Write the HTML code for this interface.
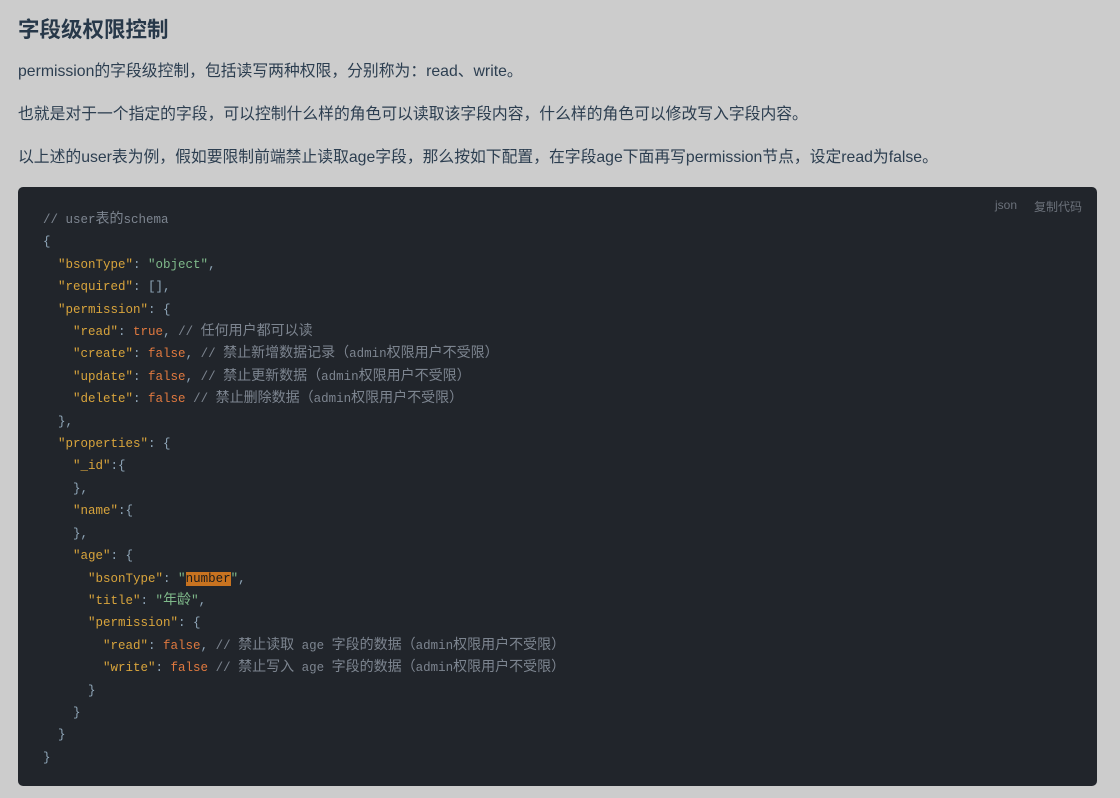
<!DOCTYPE html>
<html><head><meta charset="utf-8">
<style>
html,body{margin:0;padding:0}
body{width:1120px;height:798px;background:#cccccc;font-family:"Liberation Sans","Noto Sans CJK SC",sans-serif;color:#34495e;position:relative;overflow:hidden}
h2{position:absolute;left:18px;top:14px;margin:0;font-size:21.5px;font-weight:bold;color:#273849;line-height:32px}
p{position:absolute;left:18px;margin:0;font-size:15.8px;line-height:20px;color:#2c3e50;white-space:nowrap}
.code{position:absolute;left:18px;top:187px;width:1079px;height:599px;background:#21252b;border-radius:5px}
.lang{position:absolute;right:80px;top:11px;font-size:12px;color:#6b717a}
.copy{position:absolute;right:15px;top:11px;font-size:12px;color:#6b717a}
pre{position:absolute;left:25px;top:22px;margin:0;font-family:"Liberation Mono","Noto Sans CJK SC",monospace;font-size:12.5px;line-height:22.4px;color:#8fa6b8}
.k{color:#d8a43c}.s{color:#7fb98a}.b{color:#e0793f}.c{color:#7d8590}
.c i{font-style:normal;font-size:14px}
.h{background:#c87320;color:#1c1c1c}
</style></head><body>
<h2>字段级权限控制</h2>
<p style="top:62px">permission的字段级控制，包括读写两种权限，分别称为：read、write。</p>
<p style="top:105px">也就是对于一个指定的字段，可以控制什么样的角色可以读取该字段内容，什么样的角色可以修改写入字段内容。</p>
<p style="top:148px">以上述的user表为例，假如要限制前端禁止读取age字段，那么按如下配置，在字段age下面再写permission节点，设定read为false。</p>
<div class="code">
<span class="lang">json</span><span class="copy">复制代码</span>
<pre><span class="c">// user<i>表的</i>schema</span>
{
  <span class="k">"bsonType"</span>: <span class="s">"object"</span>,
  <span class="k">"required"</span>: [],
  <span class="k">"permission"</span>: {
    <span class="k">"read"</span>: <span class="b">true</span>, <span class="c">// <i>任何用户都可以读</i></span>
    <span class="k">"create"</span>: <span class="b">false</span>, <span class="c">// <i>禁止新增数据记录（</i>admin<i>权限用户不受限）</i></span>
    <span class="k">"update"</span>: <span class="b">false</span>, <span class="c">// <i>禁止更新数据（</i>admin<i>权限用户不受限）</i></span>
    <span class="k">"delete"</span>: <span class="b">false</span> <span class="c">// <i>禁止删除数据（</i>admin<i>权限用户不受限）</i></span>
  },
  <span class="k">"properties"</span>: {
    <span class="k">"_id"</span>:{
    },
    <span class="k">"name"</span>:{
    },
    <span class="k">"age"</span>: {
      <span class="k">"bsonType"</span>: <span class="s">"<span class="h">number</span>"</span>,
      <span class="k">"title"</span>: <span class="s">"<i style="font-style:normal;font-size:14px">年龄</i>"</span>,
      <span class="k">"permission"</span>: {
        <span class="k">"read"</span>: <span class="b">false</span>, <span class="c">// <i>禁止读取</i> age <i>字段的数据（</i>admin<i>权限用户不受限）</i></span>
        <span class="k">"write"</span>: <span class="b">false</span> <span class="c">// <i>禁止写入</i> age <i>字段的数据（</i>admin<i>权限用户不受限）</i></span>
      }
    }
  }
}</pre>
</div>
</body></html>
